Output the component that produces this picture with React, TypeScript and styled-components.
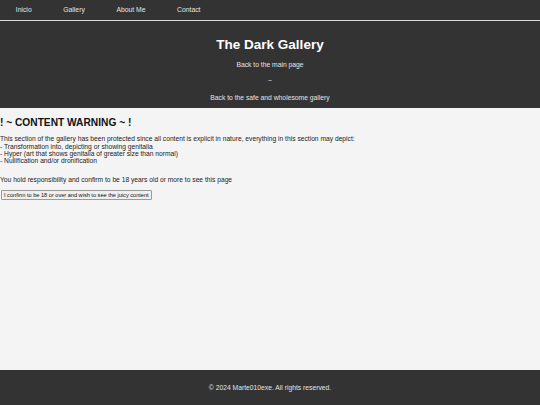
import React from "react";
import styled, { createGlobalStyle } from "styled-components";

const GlobalStyle = createGlobalStyle`
  html, body { margin: 0; padding: 0; }
  body {
    background: #f4f4f4;
    font-family: "Liberation Sans", Arial, sans-serif;
    color: #111;
  }
`;

const Page = styled.div`
  min-height: 405px;
  display: flex;
  flex-direction: column;
`;

const Nav = styled.nav`
  background: #333;
  height: 20px;
  border-bottom: 1px solid #d8d8d8;
  display: flex;
  align-items: center;
`;

const NavLink = styled.a`
  color: #e4e4e4;
  text-decoration: none;
  font-size: 6.8px;
  padding: 0 15.8px;
  line-height: 20px;
`;

const Header = styled.header`
  background: #333;
  color: #fff;
  height: 87px;
  display: flex;
  flex-direction: column;
  align-items: center;
  padding-top: 15.6px;
  box-sizing: border-box;
`;

const Title = styled.h1`
  margin: 0 0 8.7px;
  font-size: 13.5px;
  line-height: 15.6px;
  font-weight: bold;
`;

const HeaderLink = styled.a<{ $gap?: number }>`
  color: #e4e4e4;
  text-decoration: none;
  font-size: 6.75px;
  line-height: 7.9px;
  margin-bottom: ${(p) => p.$gap ?? 0}px;
`;

const Main = styled.main`
  flex: 1;
  padding-top: 9px;
`;

const Warning = styled.h2`
  margin: 0 0 6.3px;
  font-size: 10.2px;
  line-height: 11.9px;
  font-weight: bold;
  color: #111;
`;

const Text = styled.p<{ $gap?: number }>`
  margin: 0 0 ${(p) => p.$gap ?? 0}px;
  font-size: 6.7px;
  line-height: 7.33px;
  color: #222;
`;

const Button = styled.button`
  display: block;
  font-family: "Liberation Sans", Arial, sans-serif;
  font-size: 5.6px;
  line-height: 6.5px;
  padding: 0.5px 2.5px;
  margin: 0 0 0 0.5px;
  background: #efefef;
  color: #111;
  border: 0.6px solid #9a9a9a;
  border-radius: 1px;
`;

const Footer = styled.footer`
  background: #333;
  color: #e4e4e4;
  height: 35px;
  display: flex;
  align-items: center;
  justify-content: center;
  font-size: 6.75px;
`;

export default function App() {
  return (
    <>
      <GlobalStyle />
      <Page>
        <Nav>
          <NavLink href="#">Inicio</NavLink>
          <NavLink href="#">Gallery</NavLink>
          <NavLink href="#">About Me</NavLink>
          <NavLink href="#">Contact</NavLink>
        </Nav>
        <Header>
          <Title>The Dark Gallery</Title>
          <HeaderLink href="#" $gap={8}>Back to the main page</HeaderLink>
          <HeaderLink as="span" $gap={9.4}>~</HeaderLink>
          <HeaderLink href="#">Back to the safe and wholesome gallery</HeaderLink>
        </Header>
        <Main>
          <Warning>! ~ CONTENT WARNING ~ !</Warning>
          <Text $gap={11}>
            This section of the gallery has been protected since all content is explicit in nature, everything in this section may depict:
            <br />- Transformation into, depicting or showing genitalia
            <br />- Hyper (art that shows genitalia of greater size than normal)
            <br />- Nullification and/or dronification
          </Text>
          <Text $gap={7.2}>You hold responsibility and confirm to be 18 years old or more to see this page</Text>
          <Button>I confirm to be 18 or over and wish to see the juicy content</Button>
        </Main>
        <Footer>© 2024 Marte010exe. All rights reserved.</Footer>
      </Page>
    </>
  );
}
